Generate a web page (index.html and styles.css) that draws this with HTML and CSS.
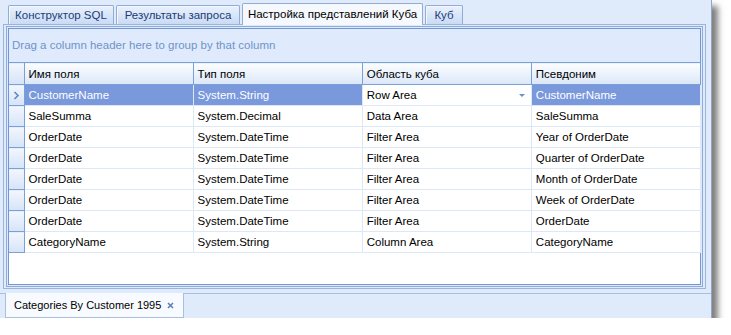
FILE: index.html
```html
<!DOCTYPE html>
<html lang="en">
<head>
    <meta charset="UTF-8">
    <title>Настройка представлений Куба</title>
    <link rel="stylesheet" href="styles.css">
</head>
<body>
    <div class="window">
        <div class="tabs">
            <div class="tab t-sql">Конструктор SQL</div>
            <div class="tab t-result">Результаты запроса</div>
            <div class="tab t-setup active">Настройка представлений Куба</div>
            <div class="tab t-cube">Куб</div>
        </div>
        <div class="page">
            <div class="inner">
                <div class="grid">
                    <div class="group-panel">Drag a column header here to group by that column</div>
                    <table class="rows">
                        <colgroup>
                            <col class="c-ind">
                            <col class="c-col">
                            <col class="c-col">
                            <col class="c-col">
                            <col class="c-col">
                        </colgroup>
                        <thead>
                            <tr>
                                <th class="ind"></th>
                                <th>Имя поля</th>
                                <th>Тип поля</th>
                                <th>Область куба</th>
                                <th>Псевдоним</th>
                            </tr>
                        </thead>
                        <tbody>
                            <tr class="selected">
                                <td class="ind">
                                    <svg width="7" height="9" viewBox="0 0 7 9"><path d="M1.5 1 L5 4.5 L1.5 8" fill="none" stroke="#5b84c6" stroke-width="1.5"/></svg>
                                </td>
                                <td>CustomerName</td>
                                <td>System.String</td>
                                <td class="editor">Row Area<span class="drop"></span></td>
                                <td>CustomerName</td>
                            </tr>
                            <tr><td class="ind"></td><td>SaleSumma</td><td>System.Decimal</td><td>Data Area</td><td>SaleSumma</td></tr>
                            <tr><td class="ind"></td><td>OrderDate</td><td>System.DateTime</td><td>Filter Area</td><td>Year of OrderDate</td></tr>
                            <tr><td class="ind"></td><td>OrderDate</td><td>System.DateTime</td><td>Filter Area</td><td>Quarter of OrderDate</td></tr>
                            <tr><td class="ind"></td><td>OrderDate</td><td>System.DateTime</td><td>Filter Area</td><td>Month of OrderDate</td></tr>
                            <tr><td class="ind"></td><td>OrderDate</td><td>System.DateTime</td><td>Filter Area</td><td>Week of OrderDate</td></tr>
                            <tr><td class="ind"></td><td>OrderDate</td><td>System.DateTime</td><td>Filter Area</td><td>OrderDate</td></tr>
                            <tr><td class="ind"></td><td>CategoryName</td><td>System.String</td><td>Column Area</td><td>CategoryName</td></tr>
                        </tbody>
                    </table>
                </div>
            </div>
        </div>
        <div class="doc-tabs">
            <div class="doc-tab">
                <span class="doc-title">Categories By Customer 1995</span>
                <svg class="close" width="7" height="7" viewBox="0 0 7 7"><path d="M1 1 L6 6 M6 1 L1 6" stroke="#5a7bb8" stroke-width="1.5"/></svg>
            </div>
        </div>
    </div>
</body>
</html>
```

FILE: styles.css
```css
body {
    margin: 0;
    background-color: #fff;
    font-family: "Liberation Sans", Arial, sans-serif;
    font-size: 11.5px;
}
.window {
    width: 711px;
    height: 318px;
    background-color: #dfeafb;
    border-right: 1px solid #8fa5c9;
    box-shadow: 6px 6px 6px rgba(0, 0, 0, 0.5);
    display: flex;
    flex-direction: column;
}
.tabs {
    display: flex;
    align-items: flex-end;
    gap: 2px;
    height: 24px;
    padding-left: 8px;
    box-sizing: border-box;
    position: relative;
    z-index: 1;
}
.tab {
    height: 19px;
    line-height: 19px;
    box-sizing: border-box;
    text-align: center;
    white-space: nowrap;
    color: #1b3c78;
    background: linear-gradient(#e9f1fc, #c9dbf5);
    border: 1px solid #93acd6;
    border-bottom: none;
    border-radius: 2px 2px 0 0;
    box-shadow: inset 1px 1px 0 #f4f8fe;
}
.t-sql {
    width: 106px;
}
.t-result {
    width: 124px;
}
.t-setup {
    width: 181px;
}
.t-cube {
    width: 38px;
}
.tab.active {
    height: 22px;
    line-height: 20px;
    color: #000;
    background: #f5f8fd;
    margin-bottom: -1px;
    box-shadow: none;
}
.page {
    margin-left: 3px;
    width: 703px;
    height: 265px;
    box-sizing: border-box;
    border: 1px solid #9db4da;
    padding: 1px 2px 1px 2px;
}
.inner {
    height: 100%;
    box-sizing: border-box;
    border: 1px solid #8eaadc;
    padding: 1px;
}
.grid {
    height: 100%;
    box-sizing: border-box;
    border: 1px solid #6f98d4;
    background-color: #fff;
}
.group-panel {
    height: 33px;
    line-height: 33px;
    padding-left: 3px;
    background-color: #dfebfc;
    color: #6f93c8;
}
.rows {
    border-collapse: collapse;
    table-layout: fixed;
    width: 692px;
}
.c-ind {
    width: 15px;
}
.c-col {
    width: 169px;
}
.rows th {
    height: 21px;
    padding: 0 0 0 4px;
    text-align: left;
    font-weight: normal;
    color: #000;
    background: linear-gradient(#fbfdff, #dbe7f8);
    border: 1px solid #7aa0d8;
    border-left: none;
}
.rows td {
    height: 20px;
    padding: 0 0 0 4px;
    white-space: nowrap;
    border-right: 1px solid #dde8f7;
    border-bottom: 1px solid #dde8f7;
}
.rows .ind {
    padding: 0;
    text-align: center;
    background: linear-gradient(#f2f6fd, #d6e3f7);
    border-right: 1px solid #7aa0d8;
    border-bottom: 1px solid #7aa0d8;
}
.rows .ind svg {
    display: block;
    margin: 0 auto;
}
.rows tr.selected td {
    background-color: #7a98dc;
    color: #fff;
}
.rows tr.selected td.ind {
    background: linear-gradient(#f2f6fd, #d6e3f7);
}
.rows tr.selected td.editor {
    background-color: #fff;
    color: #000;
    position: relative;
}
.drop {
    position: absolute;
    right: 6px;
    top: 9px;
    border-left: 3px solid transparent;
    border-right: 3px solid transparent;
    border-top: 3px solid #6f8fc2;
}
.doc-tabs {
    margin-top: 4px;
    padding-left: 5px;
    border-top: 1px solid #a9bfe2;
    height: 25px;
    box-sizing: border-box;
}
.doc-tab {
    display: flex;
    align-items: center;
    width: 179px;
    height: 25px;
    box-sizing: border-box;
    padding-left: 8px;
    background-color: #f7faff;
    border: 1px solid #a9bfe2;
    border-top: none;
    margin-top: -1px;
}
.doc-title {
    white-space: nowrap;
    font-size: 11px;
}
.close {
    margin-left: 6px;
    flex-shrink: 0;
}
```
